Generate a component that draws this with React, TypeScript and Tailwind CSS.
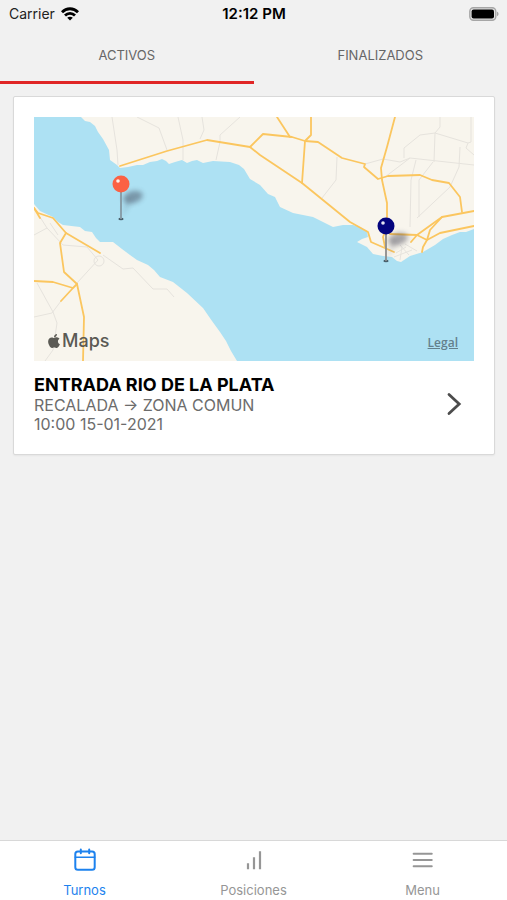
import { useState } from "react";
import { FaApple } from "react-icons/fa";

const MAJOR_ROADS = [
  "M86 49 L133 34 L173 23 L216 30 L229 17 L258 20 L271 24 L284 25 L308 41 L331 47 L330 50 L344 62 L354 59 L386 58 L398 63 L415 66 L426 80 L428 95",
  "M216 30 L226 38 L268 66 L316 105 L334 115 L337 125 L360 135",
  "M243 0 L256 20",
  "M277 0 L277 18 L271 24 L268 66",
  "M361 0 L353 30 L347 51 L348 63 L353 86 L353 110 L349 120 L351 130",
  "M356 117 L383 118 L393 123 L406 116 L440 109",
  "M440 94 L408 100 L383 118 L377 125",
  "M408 100 L396 113 L393 123 L389 130 L388 135",
  "M0 91 L4 96 L19 101 L32 116 L66 136",
  "M32 116 L26 126 L30 155 L43 167 L50 200 L49 244",
  "M0 164 L19 165 L39 171 L27 184 M43 167 L39 171",
  "M0 91 L6 101",
];

const MINOR_ROADS = [
  "M78 0 L83 33 L84 48",
  "M103 0 L125 11 L133 33",
  "M144 0 L149 23 L149 43",
  "M168 0 L170 13 L166 22",
  "M206 0 L186 18 L186 25 L182 43",
  "M303 40 L302 63 L288 81",
  "M406 0 L406 10 L401 16 L386 18 L370 31 L370 41",
  "M401 16 L434 26 L432 31 L440 38 M437 0 L437 25 L434 26",
  "M401 16 L400 45",
  "M351 60 L376 41 L440 48",
  "M426 30 L425 50 L416 70 L383 101",
  "M382 43 L377 63 L376 110",
  "M399 45 L385 63 L385 100",
  "M331 47 L349 42 L366 45 L376 41",
  "M0 118 L13 111 L29 128 L53 130 L64 143 L43 166",
  "M6 100 L13 111 M16 106 L24 118 M69 138 L89 152 L99 151 L119 172 L133 172 L140 180",
  "M3 166 L19 195 L23 206 L19 233 L11 244",
  "M0 200 L18 196 L27 184",
  "M366 128 L375 138 M362 136 L372 130 M360 140 L378 133 M366 143 L368 130 M371 127 L383 134",
];

function Pin({ x, y, color, stick }: { x: number; y: number; color: string; stick: string }) {
  return (
    <g>
      <ellipse
        cx={x + 12}
        cy={y + 13}
        rx="10"
        ry="6"
        fill="#334"
        opacity="0.42"
        filter="url(#pin-shadow)"
        transform={`rotate(-15 ${x + 12} ${y + 13})`}
      />
      <path
        d={`M${x + 1} ${y + 34} L${x + 5} ${y + 14} L${x + 12} ${y + 16} Z`}
        fill="#334"
        opacity="0.15"
        filter="url(#pin-shadow)"
      />
      <ellipse cx={x} cy={y + 35} rx="2.6" ry="1.3" fill="#48606c" />
      <path d={`M${x} ${y + 8} V${y + 35}`} stroke={stick} strokeWidth="1.8" />
      <circle cx={x} cy={y} r="8.5" fill={color} />
      <circle cx={x - 3} cy={y - 3} r="1.8" fill="#fff" opacity="0.9" />
    </g>
  );
}

function RouteMap() {
  return (
    <div className="relative">
      <svg viewBox="0 0 440 244" className="block w-full bg-[#ade1f3]" role="img" aria-label="Mapa del recorrido">
        <defs>
          <filter id="pin-shadow" x="-50%" y="-50%" width="200%" height="200%">
            <feGaussianBlur stdDeviation="2.4" />
          </filter>
        </defs>
        <path
          fill="#f8f5ed"
          d="M47 0 L51 4 L56 5 L61 9 L64 15 L69 22 L75 33 L76 43 L83 48 L86 51 L94 50 L103 48 L109 48 L116 45 L123 44 L128 42 L132 44 L135 47 L141 45 L148 43 L153 46 L158 44 L163 43 L169 46 L179 44 L196 45 L205 48 L210 52 L216 62 L226 68 L234 77 L241 80 L246 90 L259 96 L279 100 L299 110 L309 108 L319 108 L328 111 L333 115 L334 120 L328 122 L323 125 L333 130 L339 137 L349 139 L358 140 L363 144 L367 145 L376 139 L389 135 L401 128 L409 122 L418 118 L426 115 L432 115 L440 112 V0 Z"
        />
        <path
          fill="#f8f5ed"
          d="M0 87 L6 94 L19 100 L24 105 L29 108 L46 110 L51 114 L58 115 L62 121 L66 125 L79 125 L88 132 L96 138 L103 143 L114 148 L120 153 L126 160 L139 165 L153 176 L169 191 L178 204 L186 215 L192 224 L197 234 L203 244 H0 Z"
        />
        <g fill="none" stroke="#e6e3dd" strokeWidth="1" strokeLinejoin="round">
          {MINOR_ROADS.map((d) => (
            <path key={d} d={d} />
          ))}
          <circle cx="65" cy="144" r="5" />
        </g>
        <g fill="none" stroke="#fbc65f" strokeWidth="1.8" strokeLinejoin="round" strokeLinecap="round">
          {MAJOR_ROADS.map((d) => (
            <path key={d} d={d} />
          ))}
        </g>
        <Pin x={87} y={67} color="#fb6144" stick="#8598a2" />
        <Pin x={352} y={109} color="#04047e" stick="#8c8c8c" />
      </svg>
      <div className="absolute bottom-2 left-3 flex items-center text-lg leading-6 font-medium text-[#5b5a54]">
        <FaApple className="size-4" aria-hidden />
        <span>Maps</span>
      </div>
      <a href="#legal" className="absolute right-4 bottom-2 font-['Open_Sans'] text-xs leading-5 font-semibold text-[#64808c] underline">
        Legal
      </a>
    </div>
  );
}

function StatusBar() {
  return (
    <header className="grid h-7 grid-cols-3 items-center pr-2 pl-[9px] text-sm text-[#222]">
      <div className="flex items-center gap-1.5">
        <span>Carrier</span>
        <svg viewBox="0 0 18 14" className="h-3.5 w-[18px]" fill="none" stroke="#000" strokeWidth="2.8" aria-hidden>
          <path d="M1 5.2 C5.5 0.6 12.5 0.6 17 5.2" />
          <path d="M4 8.4 C6.8 5.6 11.2 5.6 14 8.4" />
          <path d="M9 13.6 L6.2 10.8 C7.8 9.3 10.2 9.3 11.8 10.8 Z" fill="#000" stroke="none" />
        </svg>
      </div>
      <span className="text-center text-[15px] font-semibold text-black">12:12 PM</span>
      <svg viewBox="0 0 30 14" className="h-3.5 w-[30px] justify-self-end" aria-hidden>
        <rect x="0.8" y="0.8" width="26" height="12.4" rx="3.6" fill="#e4e4e4" stroke="#a6a6a6" strokeWidth="1.4" />
        <rect x="2.6" y="2.6" width="22.4" height="8.8" rx="2" fill="#000" />
        <path d="M28 4.8 C30 5.4 30 8.6 28 9.2 Z" fill="#a6a6a6" />
      </svg>
    </header>
  );
}

function CalendarIcon() {
  return (
    <svg viewBox="0 0 24 24" className="size-6" fill="none" stroke="currentColor" strokeWidth="2" strokeLinecap="round" aria-hidden>
      <rect x="2.3" y="3.4" width="19.4" height="18.4" rx="2.6" />
      <path d="M2.3 9.2 H21.7" strokeWidth="1.5" />
      <path d="M7.8 1.4 V5.2 M16.2 1.4 V5.2" />
    </svg>
  );
}

function BarsIcon() {
  return (
    <svg viewBox="0 0 24 24" className="size-6" fill="none" stroke="currentColor" strokeWidth="2.2" aria-hidden>
      <path d="M6 15.2 V21.2 M12 9.2 V21.2 M18 3.2 V21.2" />
    </svg>
  );
}

function MenuIcon() {
  return (
    <svg viewBox="0 0 24 24" className="size-6" fill="none" stroke="currentColor" strokeWidth="1.9" strokeLinecap="round" aria-hidden>
      <path d="M2.6 5.8 H20.8 M2.6 12 H20.8 M2.6 18.2 H20.8" />
    </svg>
  );
}

const tabs = ["ACTIVOS", "FINALIZADOS"];

const navItems = [
  { label: "Turnos", icon: CalendarIcon },
  { label: "Posiciones", icon: BarsIcon },
  { label: "Menu", icon: MenuIcon },
];

export default function App() {
  const [tab, setTab] = useState("ACTIVOS");
  const [section, setSection] = useState("Turnos");

  return (
    <div className="flex min-h-screen flex-col bg-[#f1f1f1] font-['Inter','Liberation_Sans',sans-serif]">
      <StatusBar />
      <div role="tablist" className="grid grid-cols-2">
        {tabs.map((name) => (
          <button
            key={name}
            type="button"
            role="tab"
            aria-selected={tab === name}
            onClick={() => setTab(name)}
            className={`h-14 border-b-3 pt-0.5 text-[13px] text-[#666] ${
              tab === name ? "border-[#e02626]" : "border-transparent"
            }`}
          >
            {name}
          </button>
        ))}
      </div>

      <main className="flex-1 pt-3 pr-3 pb-6 pl-[13px]">
        {tab === "ACTIVOS" && (
          <article className="rounded-xs border border-[#d9d9d9] bg-white p-5 shadow-xs">
            <RouteMap />
            <div className="flex items-center justify-between pt-3">
              <div className="text-base leading-[19px] text-[#6c6c6c]">
                <h2 className="text-lg leading-[23px] font-bold text-black">ENTRADA RIO DE LA PLATA</h2>
                <p>RECALADA → ZONA COMUN</p>
                <p>10:00 15-01-2021</p>
              </div>
              <button type="button" aria-label="Ver turno" className="px-2">
                <svg viewBox="0 0 24 24" className="size-6" fill="none" stroke="#4c4c4c" strokeWidth="2.8" strokeLinecap="round" aria-hidden>
                  <path d="M7 2.4 L17.2 12 L7 21.6" />
                </svg>
              </button>
            </div>
          </article>
        )}
      </main>

      <nav className="grid grid-cols-3 border-t border-[#d8d8d8] bg-white">
        {navItems.map(({ label, icon: Icon }) => (
          <button
            key={label}
            type="button"
            onClick={() => setSection(label)}
            className={`flex h-[59px] flex-col items-center justify-between pt-[7px] text-[13px] leading-5 ${
              section === label ? "text-[#1d82ee]" : "text-[#969696]"
            }`}
          >
            <Icon />
            <span>{label}</span>
          </button>
        ))}
      </nav>
    </div>
  );
}
